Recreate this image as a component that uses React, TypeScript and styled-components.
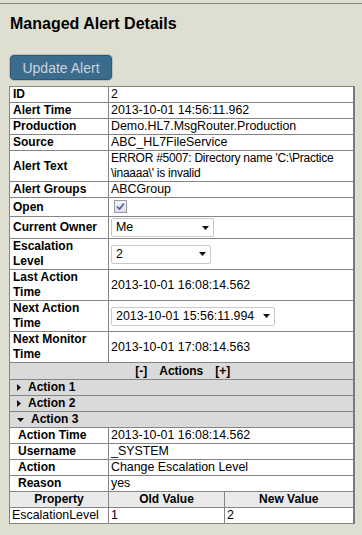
import styled, { createGlobalStyle } from "styled-components";

const GlobalStyle = createGlobalStyle`
  html, body {
    margin: 0;
    padding: 0;
    background-color: #dfdfd1;
    font-family: "Liberation Sans", Arial, sans-serif;
    color: #000;
  }
`;

const lineColor = "#858585";

const StyledPage = styled.div`
  margin-top: 3px;
  border-top: 1px solid #8a8a8a;
  min-height: 531px;
`;

const StyledTitle = styled.h1`
  margin: 11px 0 0 10px;
  font-size: 16px;
  line-height: 18px;
  font-weight: bold;
`;

const StyledButton = styled.button`
  display: block;
  margin: 22px 0 0 10px;
  width: 102px;
  height: 25px;
  padding: 0;
  background-color: #3b6b8d;
  border: 1px solid #2e5874;
  border-radius: 4px;
  box-shadow: 0 0 0 1px rgba(120, 130, 140, 0.35);
  color: #c9d5dd;
  font-family: "Liberation Sans", Arial, sans-serif;
  font-size: 14px;
`;

const StyledTable = styled.table`
  margin: 6px 0 0 9px;
  width: 344px;
  table-layout: fixed;
  border-collapse: collapse;
  border: 1px solid ${lineColor};
  border-right: 2px solid #7a7a7a;
  background-color: #fff;
  font-size: 12px;
  line-height: 15px;
`;

const StyledLabel = styled.th<{ $indent?: boolean }>`
  border: 1px solid ${lineColor};
  padding: 0 5px 0 ${(p) => (p.$indent ? "8px" : "3px")};
  text-align: left;
  vertical-align: middle;
  font-weight: bold;
`;

const StyledValue = styled.td`
  border: 1px solid ${lineColor};
  padding: 0 2px;
  vertical-align: middle;
  font-size: 12.4px;
`;

const StyledTight = styled.span`
  white-space: nowrap;
  font-size: 12px;
  letter-spacing: -0.25px;
`;

const StyledBand = styled.td<{ $tall?: boolean }>`
  border: 1px solid ${lineColor};
  padding: 0;
  background-color: #dadada;
  font-weight: bold;
  line-height: ${(p) => (p.$tall ? "16px" : "15px")};
`;

const StyledBandInner = styled.div`
  display: flex;
  justify-content: center;
  gap: 12px;
  padding-left: 3px;
`;

const StyledToggle = styled.div`
  display: flex;
  align-items: center;
  gap: 7px;
  padding-left: 7px;
`;

const StyledHeadCell = styled.th`
  border: 1px solid ${lineColor};
  background-color: #eaeaea;
  text-align: center;
  font-weight: bold;
  padding: 0;
`;

const StyledCheck = styled.span`
  display: flex;
  align-items: center;
  justify-content: center;
  width: 11px;
  height: 11px;
  margin: 2px 0 3px 3px;
  border: 1px solid #9b9ba8;
  background: linear-gradient(#f4f4f8, #dcdce6);
`;

const StyledSelect = styled.div<{ $width: number }>`
  display: flex;
  align-items: center;
  justify-content: space-between;
  box-sizing: border-box;
  width: ${(p) => p.$width}px;
  height: 19px;
  margin: 1px 0;
  padding: 0 4px 0 4px;
  border: 1px solid #c9c9c9;
  border-radius: 2px;
  background-color: #fff;
  font-size: 12.4px;
`;

const Arrow = () => (
  <svg width="7" height="4" viewBox="0 0 7 4">
    <polygon points="0,0 7,0 3.5,4" fill="#111" />
  </svg>
);

const Closed = () => (
  <svg width="4" height="7" viewBox="0 0 4 7">
    <polygon points="0,0 4,3.5 0,7" fill="#111" />
  </svg>
);

const Open = () => (
  <svg width="7" height="4" viewBox="0 0 7 4">
    <polygon points="0,0 7,0 3.5,4" fill="#111" />
  </svg>
);

const Select = ({ value, width }: { value: string; width: number }) => (
  <StyledSelect $width={width}>
    <span>{value}</span>
    <Arrow />
  </StyledSelect>
);

const Row = ({
  label,
  children,
  indent,
}: {
  label: string;
  children: React.ReactNode;
  indent?: boolean;
}) => (
  <tr>
    <StyledLabel $indent={indent}>{label}</StyledLabel>
    <StyledValue colSpan={2}>{children}</StyledValue>
  </tr>
);

const ActionBand = ({ title, open }: { title: string; open?: boolean }) => (
  <tr>
    <StyledBand colSpan={3}>
      <StyledToggle>
        {open ? <Open /> : <Closed />}
        <span>{title}</span>
      </StyledToggle>
    </StyledBand>
  </tr>
);

const App = () => {
  return (
    <StyledPage>
      <GlobalStyle />
      <StyledTitle>Managed Alert Details</StyledTitle>
      <StyledButton>Update Alert</StyledButton>
      <StyledTable>
        <colgroup>
          <col style={{ width: 99 }} />
          <col style={{ width: 116 }} />
          <col style={{ width: 129 }} />
        </colgroup>
        <tbody>
          <Row label="ID">2</Row>
          <Row label="Alert Time">2013-10-01 14:56:11.962</Row>
          <Row label="Production">Demo.HL7.MsgRouter.Production</Row>
          <Row label="Source">ABC_HL7FileService</Row>
          <Row label="Alert Text">
            <StyledTight>ERROR #5007: Directory name 'C:\Practice</StyledTight>
            <br />
            <StyledTight>\inaaaa\' is invalid</StyledTight>
          </Row>
          <Row label="Alert Groups">ABCGroup</Row>
          <Row label="Open">
            <StyledCheck>
              <svg width="9" height="9" viewBox="0 0 9 9">
                <path d="M1 4.5 L3.5 7 L8 1.5" stroke="#4a5aa0" strokeWidth="1.6" fill="none" />
              </svg>
            </StyledCheck>
          </Row>
          <Row label="Current Owner">
            <Select value="Me" width={103} />
          </Row>
          <Row label="Escalation Level">
            <Select value="2" width={100} />
          </Row>
          <Row label="Last Action Time">2013-10-01 16:08:14.562</Row>
          <Row label="Next Action Time">
            <Select value="2013-10-01 15:56:11.994" width={164} />
          </Row>
          <Row label="Next Monitor Time">2013-10-01 17:08:14.563</Row>
          <tr>
            <StyledBand colSpan={3} $tall>
              <StyledBandInner>
                <span>[-]</span>
                <span>Actions</span>
                <span>[+]</span>
              </StyledBandInner>
            </StyledBand>
          </tr>
          <ActionBand title="Action 1" />
          <ActionBand title="Action 2" />
          <ActionBand title="Action 3" open />
          <Row label="Action Time" indent>
            2013-10-01 16:08:14.562
          </Row>
          <Row label="Username" indent>
            _SYSTEM
          </Row>
          <Row label="Action" indent>
            Change Escalation Level
          </Row>
          <Row label="Reason" indent>
            yes
          </Row>
          <tr>
            <StyledHeadCell>Property</StyledHeadCell>
            <StyledHeadCell>Old Value</StyledHeadCell>
            <StyledHeadCell>New Value</StyledHeadCell>
          </tr>
          <tr>
            <StyledValue>EscalationLevel</StyledValue>
            <StyledValue>1</StyledValue>
            <StyledValue>2</StyledValue>
          </tr>
        </tbody>
      </StyledTable>
    </StyledPage>
  );
};

export default App;
